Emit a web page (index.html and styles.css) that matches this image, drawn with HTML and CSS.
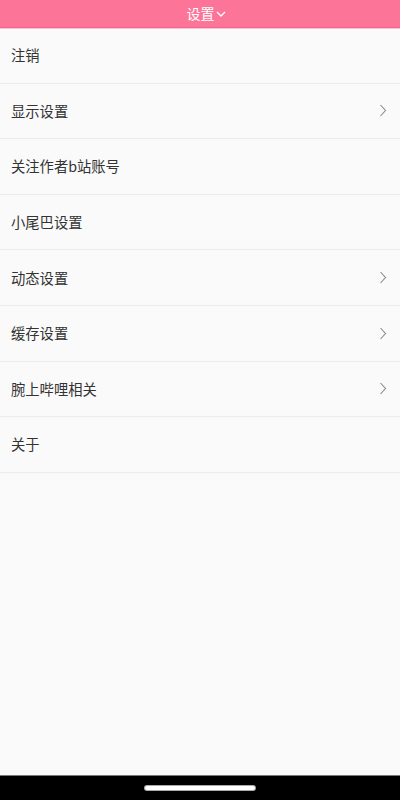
FILE: index.html
```html
<!DOCTYPE html>
<html lang="zh">
<head>
<meta charset="utf-8">
<link rel="stylesheet" href="styles.css">
</head>
<body>
<div class="app">
  <header class="header">
    <span class="title">设置</span>
    <svg class="title-caret" width="10" height="6" viewBox="0 0 10 6"><path d="M1 1 L5 5 L9 1" fill="none" stroke="#fff" stroke-width="1.3"/></svg>
  </header>
  <ul class="list">
    <li class="row"><span>注销</span></li>
    <li class="row"><span>显示设置</span><svg class="chev" width="8" height="13" viewBox="0 0 8 13"><path d="M1.5 1 L6.5 6.5 L1.5 12" fill="none" stroke="#8a8a8a" stroke-width="1.1"/></svg></li>
    <li class="row"><span>关注作者b站账号</span></li>
    <li class="row"><span>小尾巴设置</span></li>
    <li class="row"><span>动态设置</span><svg class="chev" width="8" height="13" viewBox="0 0 8 13"><path d="M1.5 1 L6.5 6.5 L1.5 12" fill="none" stroke="#8a8a8a" stroke-width="1.1"/></svg></li>
    <li class="row"><span>缓存设置</span><svg class="chev" width="8" height="13" viewBox="0 0 8 13"><path d="M1.5 1 L6.5 6.5 L1.5 12" fill="none" stroke="#8a8a8a" stroke-width="1.1"/></svg></li>
    <li class="row"><span>腕上哔哩相关</span><svg class="chev" width="8" height="13" viewBox="0 0 8 13"><path d="M1.5 1 L6.5 6.5 L1.5 12" fill="none" stroke="#8a8a8a" stroke-width="1.1"/></svg></li>
    <li class="row"><span>关于</span></li>
  </ul>
  <div class="spacer"></div>
  <div class="navbar"><div class="pill"></div></div>
</div>
</body>
</html>
```
FILE: styles.css
```css
* { box-sizing: border-box; }
html, body { margin: 0; padding: 0; }
body {
  width: 400px;
  height: 800px;
  background: #fafafa;
  font-family: "Noto Sans CJK SC", "Noto Sans", sans-serif;
  overflow: hidden;
}
.app {
  display: flex;
  flex-direction: column;
  height: 800px;
}
.header {
  height: 28px;
  background: #fc7598;
  border-bottom: 1px solid #f06a8e;
  box-shadow: 0 1px 0 #f8c4d2;
  display: flex;
  align-items: center;
  justify-content: center;
  gap: 1px;
  padding: 0 0 1px 12px;
  flex: none;
}
.title {
  color: #fff;
  font-size: 14px;
  line-height: 16px;
}
.title-caret { margin-top: 1px; }
.list {
  list-style: none;
  margin: 0;
  padding: 0;
  flex: none;
}
.row {
  height: 55.6px;
  border-bottom: 1.5px solid #ececec;
  display: flex;
  align-items: center;
  justify-content: space-between;
  padding: 0 13px 0 11px;
  font-size: 14.3px;
  color: #333;
}
.row span { line-height: 16px; }
.spacer { flex: 1; }
.navbar {
  height: 25px;
  background: #000;
  border-top: 1px solid #777;
  flex: none;
  display: flex;
  justify-content: center;
  padding-top: 10px;
}
.pill {
  width: 110px;
  height: 4px;
  border-radius: 2px;
  background: #fff;
  box-shadow: 0 0 0 1px #aaa;
}
```
